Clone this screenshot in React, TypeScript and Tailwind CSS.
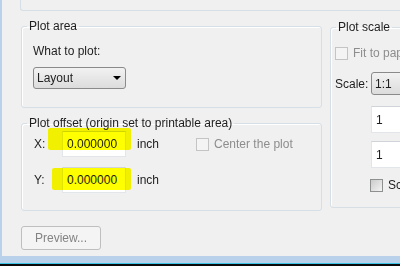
import React from "react";

const font = { fontFamily: '"Liberation Sans", Arial, sans-serif' };

function GroupBox({
  title,
  className,
  children,
}: {
  title: string;
  className?: string;
  children: React.ReactNode;
}) {
  return (
    <fieldset
      className={`rounded-[3px] border border-[#d5dfe5] shadow-[inset_1px_1px_0_#fff] ${className ?? ""}`}
    >
      <legend className="ml-[5px] px-[2px] text-[12px] leading-[14px] text-[#1e1e1e]">
        {title}
      </legend>
      {children}
    </fieldset>
  );
}

function Checkbox({ label, disabled }: { label: string; disabled?: boolean }) {
  return (
    <div className="flex items-center gap-[5px]">
      <span
        className={`h-[13px] w-[13px] shrink-0 border ${
          disabled
            ? "border-[#c4c4c4] bg-[#f4f4f4]"
            : "border-[#8e8f8f] bg-gradient-to-br from-[#cbcbcb] to-[#f4f4f4]"
        }`}
      />
      <span
        className={`whitespace-nowrap text-[12px] leading-[14px] ${
          disabled ? "text-[#8d8d8d]" : "text-[#1e1e1e]"
        }`}
      >
        {label}
      </span>
    </div>
  );
}

function Combo({ value, className }: { value: string; className?: string }) {
  return (
    <div
      className={`flex items-center justify-between rounded-[3px] border border-[#8a8a8a] bg-gradient-to-b from-[#f2f2f2] to-[#dcdcdc] pl-[3px] pr-[4px] text-[12px] leading-[14px] text-[#1e1e1e] ${className ?? ""}`}
    >
      <span>{value}</span>
      <svg width="8" height="4" viewBox="0 0 8 4">
        <path d="M0 0h8L4 4z" fill="#000" />
      </svg>
    </div>
  );
}

function TextBox({ value, className }: { value: string; className?: string }) {
  return (
    <div
      className={`flex items-center border border-[#e2e5ea] border-t-[#d0d4da] bg-white pl-[4px] text-[12px] leading-[14px] text-[#1e1e1e] ${className ?? ""}`}
    >
      {value}
    </div>
  );
}

function OffsetRow({ axis, highlight }: { axis: string; highlight: string }) {
  return (
    <div className="flex items-center">
      <span className="w-[28px] text-[12px] leading-[14px] text-[#1e1e1e]">{axis}:</span>
      <div className="relative">
        <TextBox value="0.000000" className="h-[26px] w-[64px]" />
        <div className={`pointer-events-none absolute rounded-[2px] bg-[#ffff00] mix-blend-multiply ${highlight}`} />
      </div>
      <span className="ml-[11px] text-[12px] leading-[14px] text-[#1e1e1e]">inch</span>
    </div>
  );
}

export default function App() {
  return (
    <div style={font} className="flex h-[266px] w-[400px] flex-col overflow-hidden bg-[#f0f0f0]">
      <div className="flex min-h-0 flex-1">
        <div className="w-[2px] shrink-0 bg-[#b9d1ea]" />
        <div className="flex min-w-0 flex-1 flex-col">
          <div className="ml-[18px] h-[11px] w-[400px] shrink-0 rounded-bl-[3px] border-b border-l border-[#d5dfe5]" />

          <div className="mt-[8px] flex items-start">
            <div className="ml-[19px] flex w-[301px] shrink-0 flex-col gap-[8px]">
              <GroupBox title="Plot area">
                <div className="pb-[18px] pl-[11px] pt-[11px]">
                  <div className="text-[12px] leading-[14px] text-[#1e1e1e]">What to plot:</div>
                  <Combo value="Layout" className="mt-[9px] h-[22px] w-[93px]" />
                </div>
              </GroupBox>

              <GroupBox title="Plot offset (origin set to printable area)">
                <div className="flex flex-col gap-[10px] pb-[17px] pl-[12px] pt-[1px]">
                  <div className="flex items-center">
                    <OffsetRow axis="X" highlight="-left-[14px] -top-[3px] h-[22px] w-[83px]" />
                    <div className="ml-[37px]">
                      <Checkbox label="Center the plot" disabled />
                    </div>
                  </div>
                  <OffsetRow axis="Y" highlight="-left-[10px] top-[1px] h-[22px] w-[79px]" />
                </div>
              </GroupBox>
            </div>

            <GroupBox title="Plot scale" className="ml-[8px] mt-[1px] w-[140px] shrink-0">
              <div className="flex flex-col pb-[15px] pl-[4px] pt-[12px]">
                <Checkbox label="Fit to paper" disabled />
                <div className="mt-[12px] flex items-center">
                  <span className="w-[36px] text-[12px] leading-[14px] text-[#1e1e1e]">Scale:</span>
                  <Combo value="1:1" className="h-[23px] w-[120px]" />
                </div>
                <TextBox value="1" className="ml-[36px] mt-[11px] h-[27px] w-[120px]" />
                <TextBox value="1" className="ml-[36px] mt-[8px] h-[27px] w-[120px]" />
                <div className="ml-[35px] mt-[10px]">
                  <Checkbox label="Scale lineweights" />
                </div>
              </div>
            </GroupBox>
          </div>

          <div className="ml-[19px] mt-[15px] flex h-[24px] w-[80px] items-center rounded-[3px] border border-[#bfbfbf] bg-[#f4f4f4] pl-[13px] text-[12px] leading-[14px] text-[#838383]">
            Preview...
          </div>
        </div>
      </div>
      <div className="h-[7px] shrink-0 bg-[#b9d1ea]" />
      <div className="h-px shrink-0 bg-[#3cc4e6]" />
      <div className="h-[2px] shrink-0 bg-[#0a0a0a]" />
    </div>
  );
}
